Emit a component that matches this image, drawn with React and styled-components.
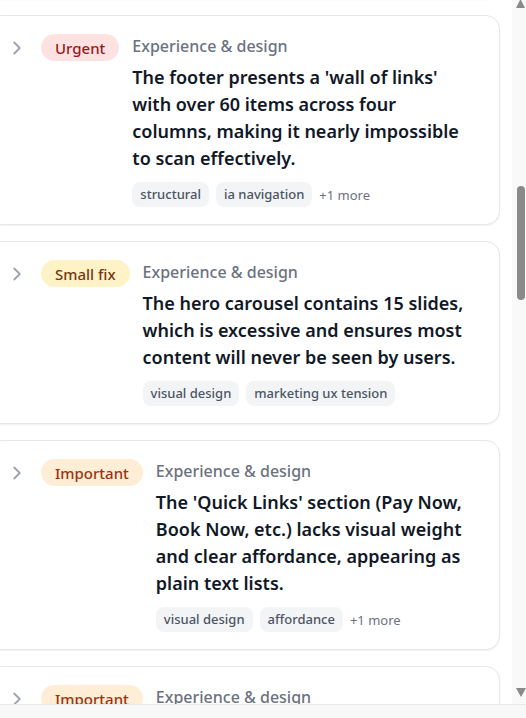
import React from "react";
import styled, { createGlobalStyle } from "styled-components";
import { ChevronRight } from "lucide-react";

const GlobalStyle = createGlobalStyle`
	* {
		box-sizing: border-box;
	}
	body {
		margin: 0;
		background: #ffffff;
		font-family: "Noto Sans", "Open Sans", sans-serif;
		-webkit-font-smoothing: antialiased;
	}
`;

const Frame = styled.div`
	width: 526px;
	height: 718px;
	display: grid;
	grid-template-columns: 1fr 14px;
	grid-template-rows: 1fr 14px;
	overflow: hidden;
`;

const Viewport = styled.div`
	overflow: hidden;
	background: #ffffff;
`;

const List = styled.div`
	display: flex;
	flex-direction: column;
	gap: 16px;
	margin: -61px 0 0 -12px;
	padding-right: 12px;
`;

const Card = styled.div`
	display: flex;
	align-items: flex-start;
	background: #ffffff;
	border: 1px solid #e5e7eb;
	border-radius: 14px;
	box-shadow: 0 1px 2px rgba(0, 0, 0, 0.06);
	padding: 18px 25px 17px 17px;
	height: ${(p) => (p.$stub ? "60px" : "auto")};
`;

const Toggle = styled.span`
	display: flex;
	flex-shrink: 0;
	width: 22px;
	height: 22px;
	margin-top: 3px;
	color: #9ca3af;
`;

const badgeColors = {
	urgent: { bg: "#fee2e2", fg: "#991b1b" },
	small: { bg: "#fef3c7", fg: "#78350f" },
	important: { bg: "#ffedd5", fg: "#9a3412" },
};

const Badge = styled.span`
	flex-shrink: 0;
	height: 27px;
	display: inline-flex;
	align-items: center;
	padding: 0 14px;
	margin: 0 13px;
	border-radius: 999px;
	font-size: 15px;
	font-weight: 500;
	background: ${(p) => badgeColors[p.$level].bg};
	color: ${(p) => badgeColors[p.$level].fg};
`;

const Body = styled.div`
	flex: 1;
	min-width: 0;
`;

const Category = styled.div`
	font-size: 16px;
	line-height: 25px;
	font-weight: 500;
	color: #6b7280;
`;

const Title = styled.p`
	margin: 5px 0 0;
	font-size: 18px;
	line-height: 27px;
	font-weight: 600;
	color: #111827;
`;

const Tags = styled.div`
	display: flex;
	align-items: center;
	flex-wrap: wrap;
	gap: 7px;
	margin-top: 10px;
`;

const Tag = styled.span`
	padding: 4px 8px;
	border-radius: 8px;
	background: #f3f4f6;
	color: #4b5563;
	font-size: 13px;
	line-height: 17px;
	font-weight: 500;
`;

const More = styled.span`
	font-size: 13px;
	color: #6b7280;
`;

const VBar = styled.div`
	background: #f9f9f9;
	display: flex;
	flex-direction: column;
	padding-bottom: 7px;
`;

const Arrow = styled.svg`
	display: block;
	flex-shrink: 0;
	fill: #8a8a8a;
`;

const Track = styled.div`
	flex: 1;
	padding-top: 178px;
`;

const Thumb = styled.div`
	width: 8px;
	height: 114px;
	margin-left: 5px;
	border-radius: 4px;
	background: #8a8a8a;
`;

const HBar = styled.div`
	grid-column: 1 / 3;
	background: #f8f8f8;
	border-top: 1px solid #ebebeb;
`;

const issues = [
	{
		level: "urgent",
		label: "Urgent",
		title:
			"The footer presents a 'wall of links' with over 60 items across four columns, making it nearly impossible to scan effectively.",
		tags: ["structural", "ia navigation"],
		more: 1,
	},
	{
		level: "small",
		label: "Small fix",
		title:
			"The hero carousel contains 15 slides, which is excessive and ensures most content will never be seen by users.",
		tags: ["visual design", "marketing ux tension"],
		more: 0,
	},
	{
		level: "important",
		label: "Important",
		title:
			"The 'Quick Links' section (Pay Now, Book Now, etc.) lacks visual weight and clear affordance, appearing as plain text lists.",
		tags: ["visual design", "affordance"],
		more: 1,
	},
	{
		level: "important",
		label: "Important",
		title: "Navigation labels use internal jargon.",
		tags: [],
		more: 0,
	},
];

function Issue({ issue }) {
	return (
		<Card>
			<Toggle>
				<ChevronRight size={22} strokeWidth={2} />
			</Toggle>
			<Badge $level={issue.level}>{issue.label}</Badge>
			<Body>
				<Category>Experience &amp; design</Category>
				<Title>{issue.title}</Title>
				{issue.tags.length > 0 && (
					<Tags>
						{issue.tags.map((t) => (
							<Tag key={t}>{t}</Tag>
						))}
						{issue.more > 0 && <More>+{issue.more} more</More>}
					</Tags>
				)}
			</Body>
		</Card>
	);
}

export default function App() {
	return (
		<>
			<GlobalStyle />
			<Frame>
				<Viewport>
					<List>
						<Card $stub />
						{issues.map((issue, i) => (
							<Issue key={i} issue={issue} />
						))}
					</List>
				</Viewport>
				<VBar>
					<Arrow width="14" height="8" viewBox="0 0 14 8">
						<polygon points="4,8 13,8 8.5,-1" />
					</Arrow>
					<Track>
						<Thumb />
					</Track>
					<Arrow width="14" height="9" viewBox="0 0 14 9">
						<polygon points="4,0 14,0 9,9" />
					</Arrow>
				</VBar>
				<HBar />
			</Frame>
		</>
	);
}
